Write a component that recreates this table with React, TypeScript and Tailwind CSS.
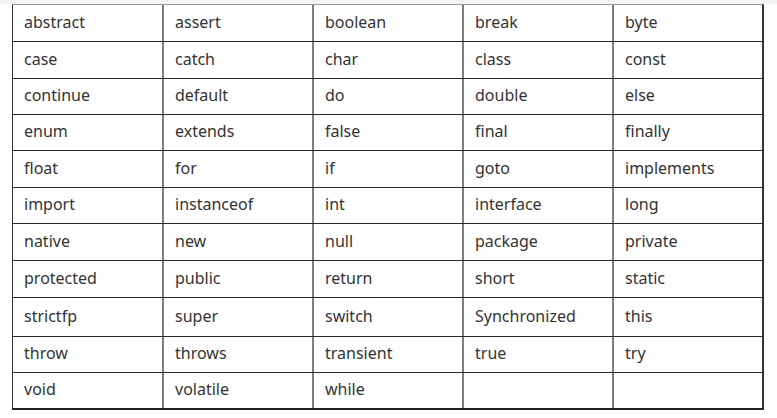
import React from "react";

const rows: string[][] = [
  ["abstract", "assert", "boolean", "break", "byte"],
  ["case", "catch", "char", "class", "const"],
  ["continue", "default", "do", "double", "else"],
  ["enum", "extends", "false", "final", "finally"],
  ["float", "for", "if", "goto", "implements"],
  ["import", "instanceof", "int", "interface", "long"],
  ["native", "new", "null", "package", "private"],
  ["protected", "public", "return", "short", "static"],
  ["strictfp", "super", "switch", "Synchronized", "this"],
  ["throw", "throws", "transient", "true", "try"],
  ["void", "volatile", "while", "", ""],
];

const heights = [37, 37, 36, 36, 37, 36, 37, 37, 39, 36, 35];

export default function App() {
  return (
    <div
      className="w-[777px] h-[418px] bg-white overflow-hidden"
      style={{ fontFamily: '"Noto Sans", "Open Sans", sans-serif' }}
    >
      <div className="h-[4px] bg-[#f2f2f2]" />
      <div className="ml-[12px] w-[752px] border-t border-t-[#9a9a9a] border-l border-l-[#333] border-r-2 border-r-[#333] border-b-2 border-b-[#222]">
        {rows.map((row, i) => (
          <div
            key={i}
            className={
              "flex " +
              (i < rows.length - 1 ? "border-b border-b-[#2a2a2a]" : "")
            }
            style={{ height: heights[i] }}
          >
            {row.map((cell, j) => (
              <div
                key={j}
                className={
                  "flex items-center pl-[11px] pb-[3px] text-[16px] text-[#333] leading-none " +
                  (j === 0
                    ? "w-[151px] border-r-2 border-r-[#7d7d7d]"
                    : j < 4
                    ? "w-[150px] border-r-2 border-r-[#7d7d7d]"
                    : "flex-1")
                }
              >
                {cell}
              </div>
            ))}
          </div>
        ))}
      </div>
    </div>
  );
}
